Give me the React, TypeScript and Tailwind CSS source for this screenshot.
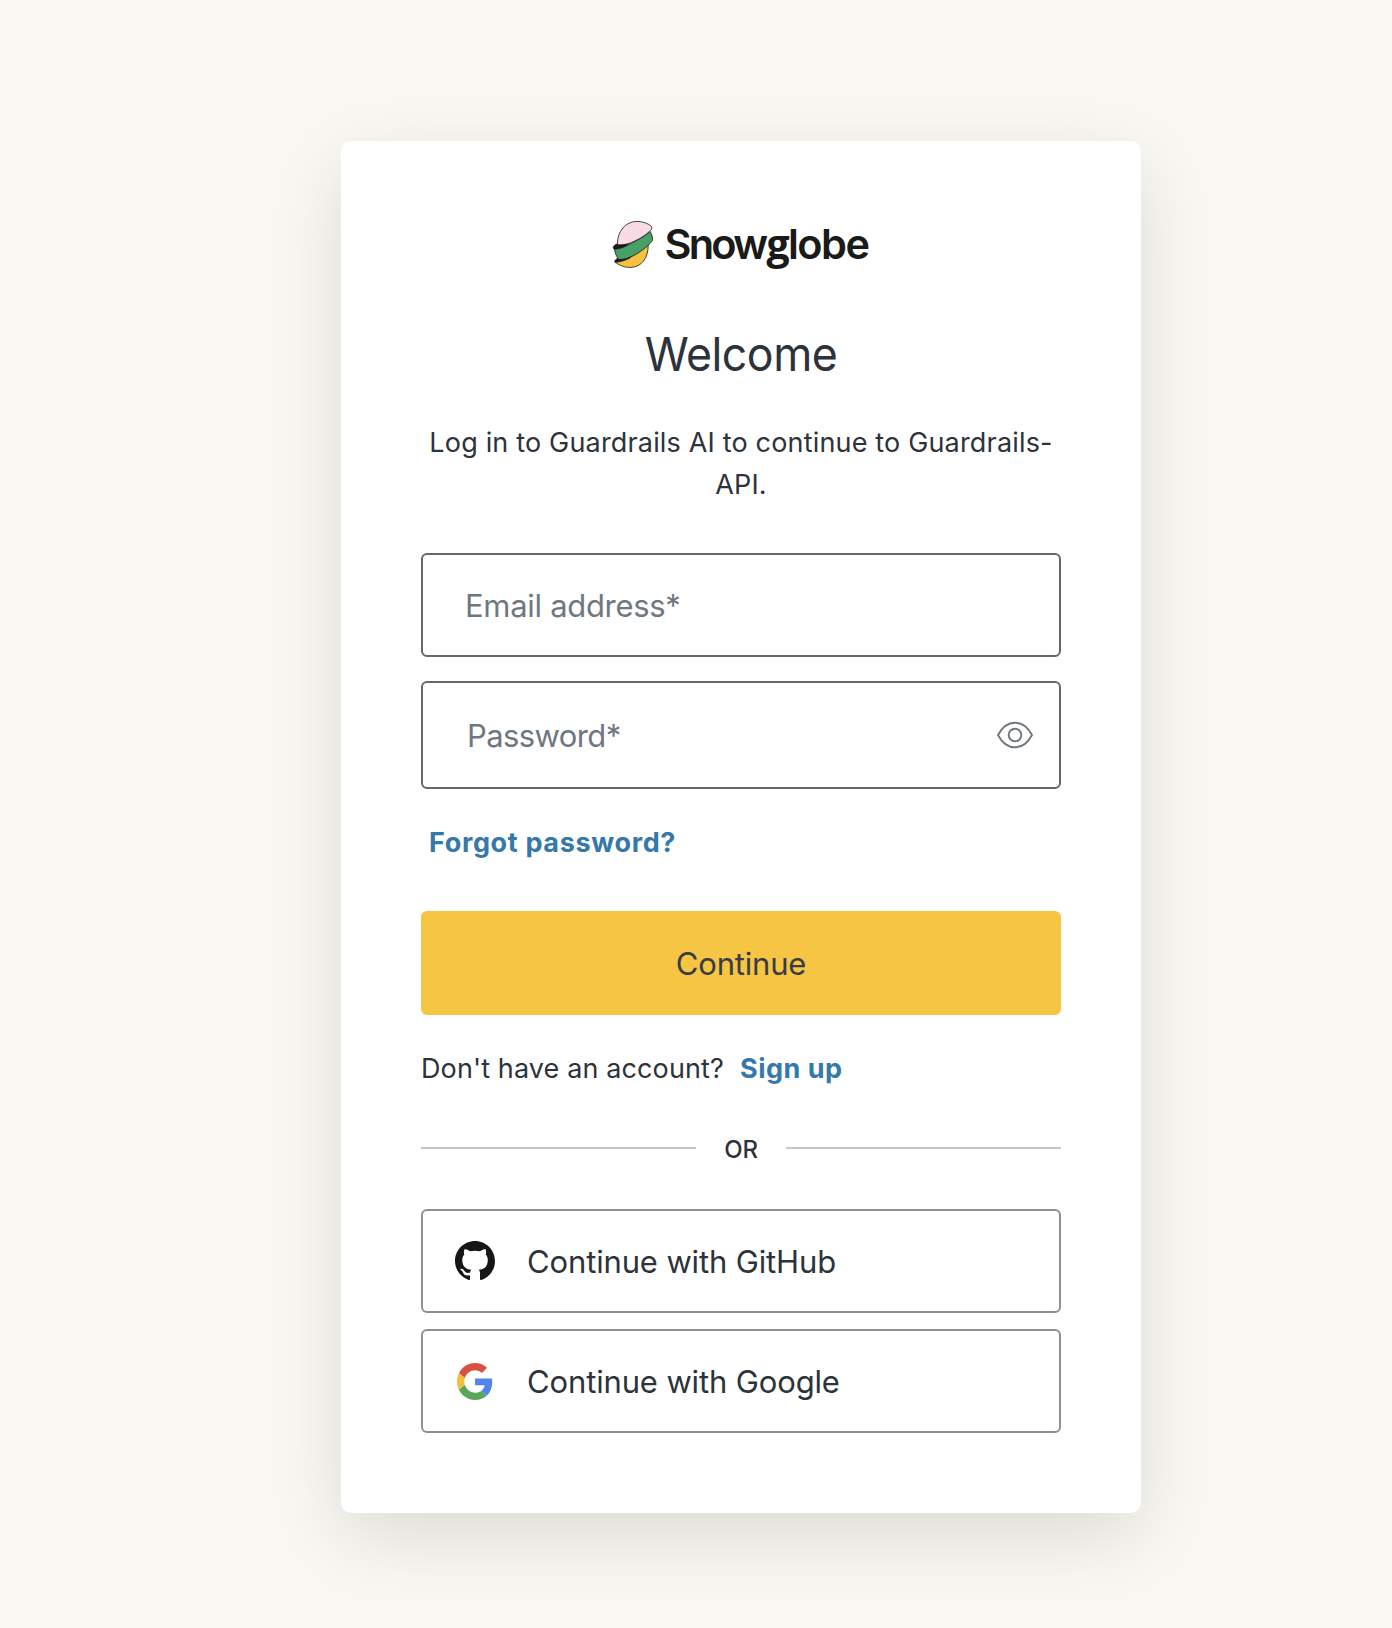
import React from "react";

function Logo() {
  return (
    <svg width="260" height="52" viewBox="0 0 260 52" role="img" aria-label="Snowglobe" className="block overflow-visible">
      <g stroke="#1a1a18" strokeWidth="0.8" strokeLinejoin="round">
        <path d="M4 41 C9 45 14 46.600 20 46.400 C30 45.800 37.600 38 37.200 23 C30 31 18 38 4 41Z" fill="#f6c140" />
        <path d="M7.500 37 C4.500 38.200 3.300 39.600 4 41.300 C9 41 14 39.500 19 37 L22 34 L8 37.500Z" fill="#1a1a18" />
        <path d="M6.500 22.800 C3.500 23.800 2 25.500 2.300 26.800 C2.600 28 3.400 28.600 4.200 28.600 L14 26 L22 19Z" fill="#1a1a18" />
        <path d="M3.600 28.300 C9 27.800 13 26.400 18 23.500 C26 19.500 33 15.500 39.200 10.500 C40.800 13 41.700 16.500 41.600 19.500 C35 27.500 25 34.500 15.500 37.500 C12.500 38.300 10 38.600 7.800 38.400 C5.400 35.500 3.900 32 3.600 28.300Z" fill="#47a067" />
        <path d="M6.300 23.800 C6.300 10 14.500 0.500 26 0.400 C32 0.400 37.500 2.500 40.600 5.600 C41 6.500 40.900 7.300 40.500 8.300 C35 14.500 26 19.500 17.500 22.600 C14 23.700 10 24 6.300 23.800Z" fill="#f9dbe6" />
      </g>
      <text y="37.500" fill="#1a1a18" className="font-['Inter',sans-serif] text-[41.500px] font-semibold">
        <tspan x="53.500" textLength="103.500" lengthAdjust="spacing">Snow</tspan>
        <tspan x="155.500" className="font-['Open_Sans',sans-serif] text-[41px] font-bold">g</tspan>
        <tspan x="177" textLength="82" lengthAdjust="spacing">lobe</tspan>
      </text>
    </svg>
  );
}

function EyeIcon() {
  return (
    <svg width="38" height="28" viewBox="0 0 38 28" fill="none" stroke="#6f7780" strokeWidth="1.900" strokeLinejoin="round">
      <path d="M2 14 C6.200 6 11.800 1.700 19 1.700 S31.800 6 36 14 C31.800 22 26.200 26.300 19 26.300 S6.200 22 2 14Z" />
      <circle cx="19" cy="14" r="6.300" />
    </svg>
  );
}

function GitHubIcon() {
  return (
    <svg width="40" height="40" viewBox="0 0 16 16" fill="#161614">
      <path d="M8 0C3.580 0 0 3.580 0 8c0 3.540 2.290 6.530 5.470 7.590.4.070.55-.17.55-.38 0-.19-.01-.82-.01-1.490-2.010.37-2.530-.49-2.690-.94-.09-.23-.48-.94-.82-1.130-.28-.15-.68-.52-.01-.53.63-.01 1.080.58 1.230.82.72 1.210 1.870.87 2.330.66.07-.52.28-.87.51-1.070-1.780-.2-3.640-.89-3.640-3.950 0-.87.31-1.590.82-2.150-.08-.2-.36-1.020.08-2.120 0 0 .67-.21 2.200.82.64-.18 1.320-.27 2-.27s1.360.09 2 .27c1.530-1.040 2.200-.82 2.200-.82.44 1.100.16 1.920.08 2.120.51.56.82 1.270.82 2.150 0 3.070-1.870 3.750-3.650 3.950.29.25.54.73.54 1.480 0 1.070-.01 1.930-.01 2.200 0 .21.15.46.55.38A8.010 8.010 0 0 0 16 8c0-4.420-3.580-8-8-8z" />
    </svg>
  );
}

function GoogleIcon() {
  return (
    <svg width="36" height="37" viewBox="0 0 48 48" preserveAspectRatio="none">
      <path fill="#d9503f" d="M24 9.500c3.540 0 6.710 1.220 9.210 3.600l6.850-6.850C35.900 2.380 30.470 0 24 0 14.620 0 6.510 5.380 2.560 13.220l7.980 6.190C12.430 13.720 17.740 9.500 24 9.500z" />
      <path fill="#5383ec" d="M46.980 24.550c0-1.570-.15-3.090-.38-4.550H24v9.020h12.940c-.58 2.960-2.260 5.480-4.780 7.180l7.730 6c4.510-4.180 7.090-10.360 7.090-17.650z" />
      <path fill="#f1bf42" d="M10.530 28.590c-.48-1.450-.76-2.990-.76-4.590s.27-3.140.76-4.590l-7.980-6.190C.92 16.460 0 20.120 0 24c0 3.880.92 7.540 2.560 10.780l7.970-6.190z" />
      <path fill="#58a55c" d="M24 48c6.480 0 11.930-2.130 15.890-5.810l-7.730-6c-2.150 1.450-4.920 2.300-8.160 2.300-6.260 0-11.570-4.220-13.470-9.910l-7.980 6.190C6.510 42.620 14.620 48 24 48z" />
    </svg>
  );
}

function SocialButton({ icon, label }: { icon: React.ReactNode; label: string }) {
  return (
    <button className="flex h-[104px] w-full items-center rounded-[6px] border-2 border-[#8f8f8f] text-[31px] tracking-[-0.14px]">
      <span className="ml-8 flex w-10 justify-center">{icon}</span>
      <span className="ml-8 pt-[3px]">{label}</span>
    </button>
  );
}

export default function App() {
  return (
    <div className="min-h-[1628px] overflow-hidden bg-[#f9f8f3] pt-[141px] font-['Inter',sans-serif] text-[#2d333a]">
      <main className="ml-[341px] h-[1372px] w-[800px] rounded-[10px] bg-white px-20 pt-20 shadow-[0_24px_80px_rgba(0,0,0,0.12)]">
        <div className="flex justify-center">
          <Logo />
        </div>
        <h1 className="mt-[49px] scale-x-[0.95] text-center text-[47px] leading-[64px] tracking-[-0.5px]">Welcome</h1>
        <p className="mt-9 text-center text-[27px] leading-[42px] tracking-[0.17px]">
          Log in to Guardrails AI to continue to Guardrails-
          <br />
          API.
        </p>

        <div className="mt-[47px] flex h-[104px] items-center rounded-[6px] border-2 border-[#65676b] pt-[3px] pl-[42px]">
          <input aria-label="Email address" placeholder="Email address*" className="w-full text-[31px] tracking-[-0.3px] outline-none placeholder:text-[#6f7780]" />
        </div>
        <div className="mt-6 flex h-[108px] items-center rounded-[6px] border-2 border-[#65676b] pr-[25px] pl-[44px]">
          <input aria-label="Password" placeholder="Password*" className="min-w-0 flex-1 pt-[3px] text-[31px] tracking-[-0.6px] outline-none placeholder:text-[#6f7780]" />
          <EyeIcon />
        </div>

        <p className="mt-[33px] pl-2 text-[27px] leading-[42px] font-bold tracking-[0.65px] text-[#3578a9]">Forgot password?</p>

        <button className="mt-[47px] block h-[104px] w-full rounded-[6px] bg-[#f6c544] pt-[3px] text-[31px] tracking-[-0.2px] text-[#373c47]">Continue</button>

        <p className="mt-[33px] flex gap-4 text-[27px] leading-[42px] tracking-[0.12px]">
          <span>Don't have an account?</span>
          <span className="font-bold tracking-[0.5px] text-[#3578a9]">Sign up</span>
        </p>

        <div className="mt-10 flex h-9 items-center">
          <span className="h-0.5 flex-1 bg-[#c2c8d0]" />
          <span className="w-[90px] pt-1 text-center text-[24px] leading-[32px] font-medium tracking-[-0.3px]">OR</span>
          <span className="h-0.5 flex-1 bg-[#c2c8d0]" />
        </div>

        <div className="mt-[43px] flex flex-col gap-4">
          <SocialButton icon={<GitHubIcon />} label="Continue with GitHub" />
          <SocialButton icon={<GoogleIcon />} label="Continue with Google" />
        </div>
      </main>
    </div>
  );
}
